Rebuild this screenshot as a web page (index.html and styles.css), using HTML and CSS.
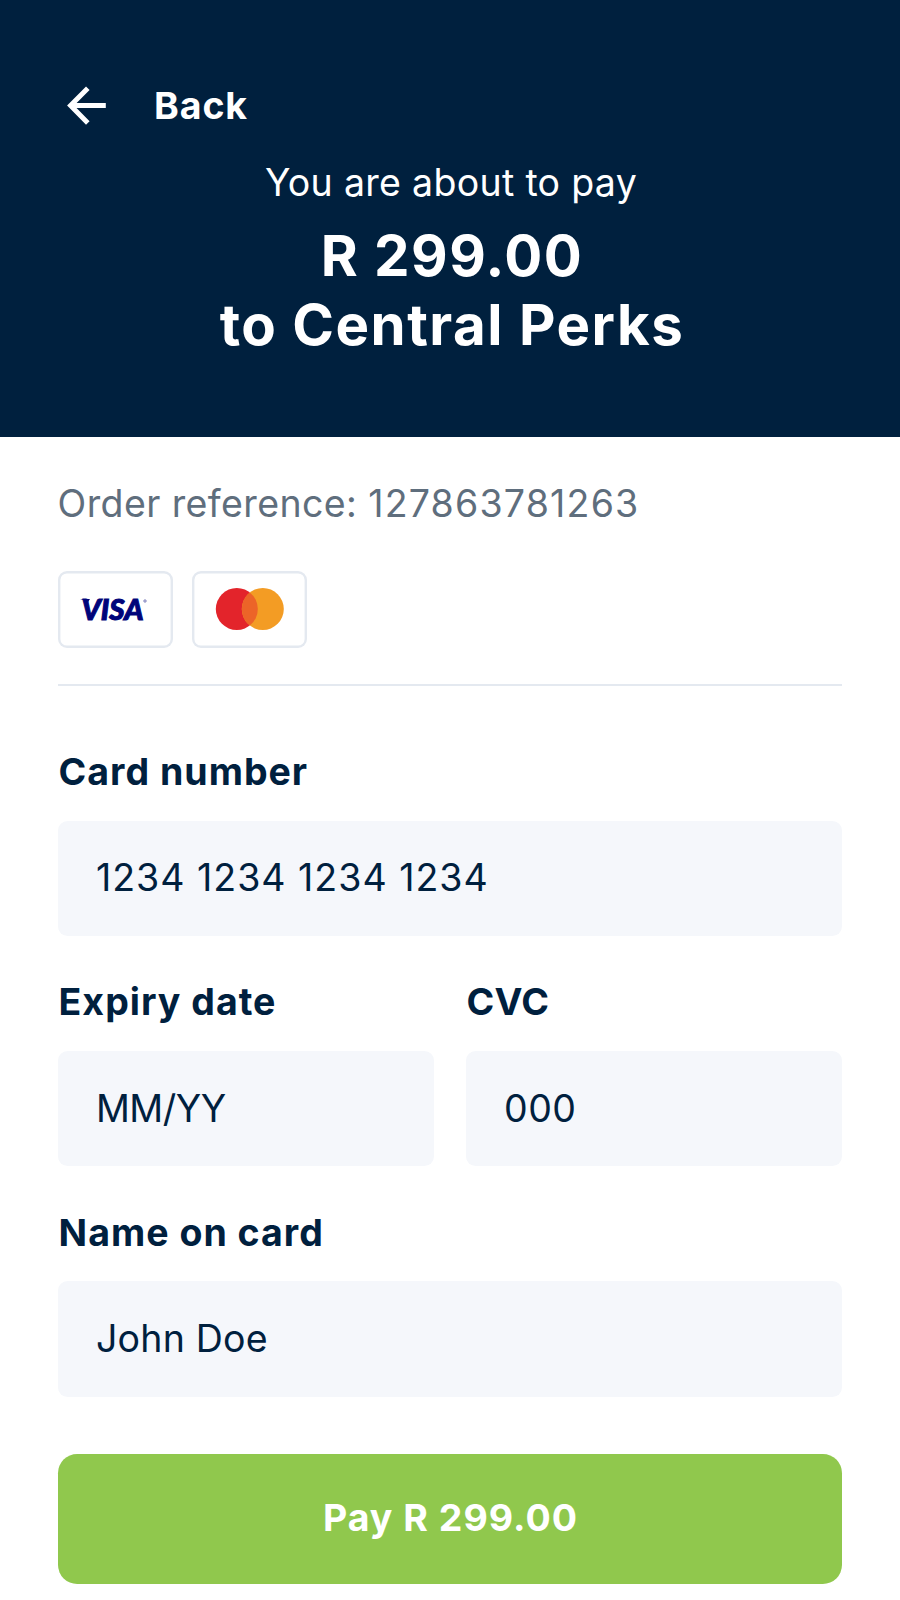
FILE: index.html
```html
<!DOCTYPE html>
<html lang="en">
  <head>
    <meta charset="UTF-8">
    <title>Pay Central Perks</title>
    <link rel="stylesheet" href="styles.css">
  </head>
  <body>
    <header class="header">
      <a class="back" href="#">
        <svg class="back-icon" viewBox="0 0 40 40" fill="none" stroke="#fff" stroke-width="5">
          <path d="M21.8 2.2L4.6 19.6L21.8 37M4 19.6H39.8"/>
        </svg>
        <span>Back</span>
      </a>
      <p class="intro">You are about to pay</p>
      <h1 class="amount">R 299.00</h1>
      <h1 class="merchant">to Central Perks</h1>
    </header>
    <main class="content">
      <p class="reference">Order reference: <span class="digits">127863781263</span></p>
      <div class="cards">
        <div class="card">
          <svg width="115" height="77" viewBox="0 0 115 77">
            <text class="visa" x="23.5" y="48.6" textLength="62" lengthAdjust="spacingAndGlyphs">VISA</text>
            <path d="M22 28H32L30 31Q27 28.8 22 28Z" fill="#00047a"/>
            <circle cx="87" cy="30" r="1.2" fill="none" stroke="#00047a" stroke-width="0.5"/>
          </svg>
        </div>
        <div class="card">
          <svg width="115" height="77" viewBox="0 0 115 77">
            <circle cx="44.8" cy="38" r="21" fill="#e3242b"/>
            <circle cx="70.8" cy="38" r="21" fill="#f39c24"/>
            <path d="M57.8 21.5A21 21 0 0 1 57.8 54.5A21 21 0 0 1 57.8 21.5Z" fill="#ec6428"/>
          </svg>
        </div>
      </div>
      <form class="form">
        <div class="field">
          <label for="number">Card number</label>
          <input type="text" class="digits" id="number" value="1234 1234 1234 1234">
        </div>
        <div class="row">
          <div class="field">
            <label for="expiry">Expiry date</label>
            <input type="text" id="expiry" value="MM/YY">
          </div>
          <div class="field">
            <label for="cvc" class="cvc-label">CVC</label>
            <input type="text" id="cvc" value="000">
          </div>
        </div>
        <div class="field">
          <label for="name">Name on card</label>
          <input type="text" id="name" value="John Doe">
        </div>
        <button type="button" class="pay">Pay R 299.00</button>
      </form>
    </main>
  </body>
</html>
```
FILE: styles.css
```css
* {
  box-sizing: border-box;
}

body {
  margin: 0;
  font-family: Inter, sans-serif;
  font-size: 37.5px;
  font-weight: 370;
  line-height: 48px;
  color: #00203e;
  background-color: #fff;
}

h1,
p {
  margin: 0;
}

.header {
  height: 436.6px;
  padding-top: 82px;
  color: #fff;
  background-color: #00203e;
  text-align: center;
}

.back {
  display: flex;
  align-items: center;
  gap: 48px;
  height: 48px;
  padding-left: 66px;
  color: #fff;
  font-weight: 700;
  letter-spacing: 0.9px;
  text-decoration: none;
}

.back-icon {
  width: 40px;
  height: 40px;
}

.intro {
  margin-top: 29px;
  padding-left: 2px;
  letter-spacing: 0.3px;
}

.amount,
.merchant {
  padding-left: 4px;
  font-size: 56.4px;
  font-weight: 700;
  line-height: 69px;
  letter-spacing: 1.5px;
}

.amount {
  margin-top: 14px;
}

.content {
  padding: 43.6px 57.6px 0;
}

.reference {
  color: #5f6e7d;
  letter-spacing: 0.4px;
}

.reference .digits {
  letter-spacing: 1.2px;
}

.cards {
  display: flex;
  gap: 19.2px;
  margin-top: 42.8px;
  padding-bottom: 36px;
  border-bottom: 2px solid #e4e9f0;
}

.card {
  width: 115px;
  height: 77px;
  border-radius: 9px;
  box-shadow: inset 0 0 0 2.4px #e4e9f0;
}

.visa {
  font-family: Lato, sans-serif;
  font-size: 28px;
  font-style: italic;
  font-weight: 900;
  fill: #00047a;
  stroke: #00047a;
  stroke-width: 1px;
}

.form {
  padding-top: 62px;
}

.field {
  flex: 1;
  min-width: 0;
  margin-bottom: 42.6px;
}

.row {
  display: flex;
  gap: 31.2px;
}

label {
  display: block;
  height: 48px;
  margin-bottom: 24.6px;
  padding-left: 1px;
  font-weight: 700;
  letter-spacing: 1px;
}

.cvc-label {
  letter-spacing: 0.2px;
}

input {
  display: block;
  width: 100%;
  height: 115.2px;
  padding: 0 38.4px 1px;
  border: none;
  border-radius: 9.6px;
  background-color: #f5f7fb;
  color: #00203e;
  font: inherit;
}

input.digits {
  letter-spacing: 1px;
}

#expiry {
  letter-spacing: -0.5px;
}

#cvc {
  letter-spacing: 0.5px;
}

#name {
  letter-spacing: 0.2px;
}

.pay {
  width: 100%;
  height: 129.6px;
  margin-top: 15px;
  padding: 0 0 2px 1px;
  border: none;
  border-radius: 19.2px;
  background-color: #90c84d;
  color: #fff;
  font: inherit;
  font-weight: 700;
  letter-spacing: 1px;
}
```
